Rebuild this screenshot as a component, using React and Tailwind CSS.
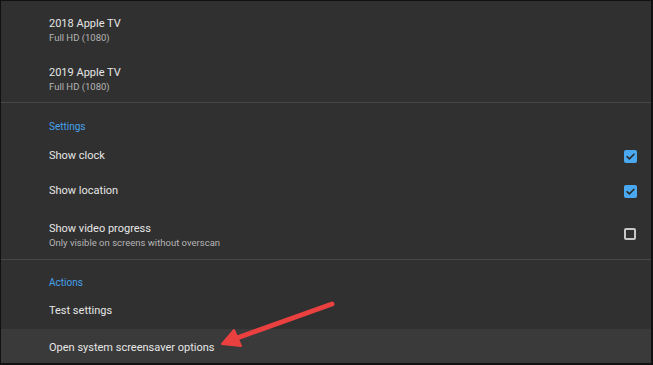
export default function App() {
  const Check = ({ on }) =>
    on ? (
      <span className="flex h-[13px] w-[13px] items-center justify-center rounded-[2px] bg-[#4aa8f0]">
        <svg width="11" height="11" viewBox="0 0 12 12" fill="none">
          <path d="M2.2 6.2 L4.8 8.6 L9.8 3.6" stroke="#2a2a2a" strokeWidth="1.7" strokeLinecap="round" strokeLinejoin="round" />
        </svg>
      </span>
    ) : (
      <span className="h-[12px] w-[12px] rounded-[2px] border-2 border-[#c8c8c8]" />
    );

  return (
    <div
      className="relative h-[365px] w-[653px] overflow-hidden border-b-2 border-l border-r-2 border-t border-[#111] bg-[#303030] text-[#e6e6e6]"
      style={{ fontFamily: 'Roboto, "Noto Sans", sans-serif' }}
    >
      <div className="flex flex-col pt-[16px]">
        <div className="pl-[48px]">
          <div className="text-[11px] leading-[14px]">2018 Apple TV</div>
          <div className="text-[9.5px] leading-[13px] text-[#b5b5b5]">Full HD (1080)</div>
        </div>
        <div className="mt-[22px] pl-[48px]">
          <div className="text-[11px] leading-[14px]">2019 Apple TV</div>
          <div className="text-[9.5px] leading-[13px] text-[#b5b5b5]">Full HD (1080)</div>
        </div>
        <div className="mt-[9px] h-px bg-[#474747]" />

        <div className="mt-[17px] pl-[48px] text-[10px] leading-[14px] text-[#45a2ec]">Settings</div>

        <div className="mt-[5px] flex h-[35px] items-center justify-between pl-[48px] pr-[14px]">
          <span className="text-[11px]">Show clock</span>
          <Check on />
        </div>
        <div className="flex h-[35px] items-center justify-between pl-[48px] pr-[14px]">
          <span className="text-[11px]">Show location</span>
          <Check on />
        </div>
        <div className="flex h-[50px] items-center justify-between pl-[48px] pr-[15px]">
          <div className="pt-[2px]">
            <div className="text-[11px] leading-[14px]">Show video progress</div>
            <div className="text-[9.5px] leading-[13px] text-[#b5b5b5]">Only visible on screens without overscan</div>
          </div>
          <Check on={false} />
        </div>
        <div className="h-px bg-[#474747]" />

        <div className="mt-[16px] pl-[48px] text-[10px] leading-[14px] text-[#45a2ec]">Actions</div>
        <div className="mt-[4px] flex h-[35px] items-center pl-[48px]">
          <span className="text-[11px]">Test settings</span>
        </div>
        <div className="flex h-[40px] items-center bg-[#3a3a3a] pb-[2px] pl-[48px]">
          <span className="text-[11px]">Open system screensaver options</span>
        </div>
      </div>

      <svg className="pointer-events-none absolute left-0 top-0" width="653" height="365">
        <line x1="331" y1="303" x2="236" y2="337" stroke="#ea4040" strokeWidth="5" strokeLinecap="round" />
        <polygon points="221,343 233,329 240,345" fill="#ea4040" stroke="#ea4040" strokeWidth="2" strokeLinejoin="round" />
      </svg>
    </div>
  );
}
